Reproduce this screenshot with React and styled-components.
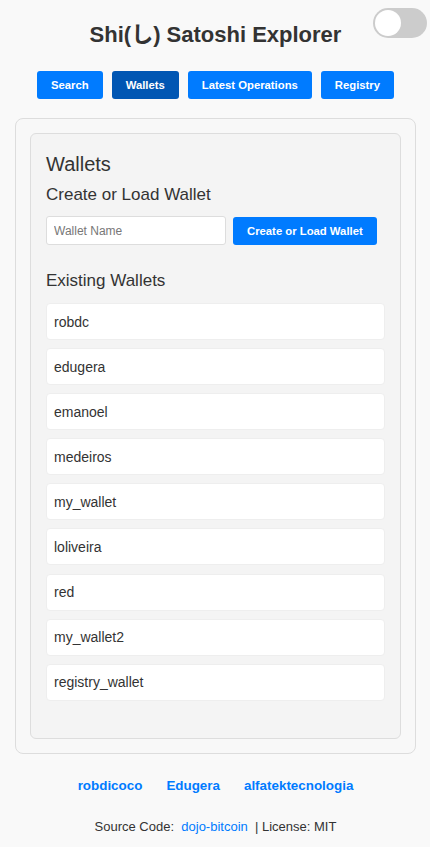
import React, { useState } from 'react';
import styled, { createGlobalStyle } from 'styled-components';

const GlobalStyle = createGlobalStyle`
  body {
    margin: 0;
    background-color: #f9f9f9;
    font-family: Arial, "Liberation Sans", "Noto Sans CJK JP", sans-serif;
    color: #333;
  }
`;

const Page = styled.div`
  position: relative;
  padding: 0 14px 14px 15px;
`;

// Toggle de tema, fica no canto
const Toggle = styled.button`
  position: absolute;
  top: 8px;
  right: 3px;
  width: 54px;
  height: 30px;
  border-radius: 15px;
  border: none;
  padding: 0;
  background-color: ${(p) => (p.on ? '#007bff' : '#ccc')};
  cursor: pointer;

  &::after {
    content: '';
    position: absolute;
    top: 2px;
    left: ${(p) => (p.on ? '26px' : '2px')};
    width: 26px;
    height: 26px;
    border-radius: 50%;
    background-color: #fff;
  }
`;

const Title = styled.h1`
  margin: 0;
  padding-top: 22px;
  font-size: 22px;
  font-weight: bold;
  text-align: center;
  color: #333;
  line-height: 26px;
`;

const Nav = styled.nav`
  display: flex;
  justify-content: center;
  gap: 9px;
  margin-top: 23px;
`;

const NavButton = styled.button`
  background-color: ${(p) => (p.active ? '#0056b3' : '#007bff')};
  color: #fff;
  border: none;
  border-radius: 3px;
  height: 28px;
  padding: 0 14px;
  font-family: inherit;
  font-size: 11.3px;
  font-weight: bold;
  cursor: pointer;
`;

const Container = styled.main`
  margin-top: 19px;
  border: 1px solid #ddd;
  border-radius: 8px;
  padding: 14px;
  background-color: #f8f8f8;
`;

const Card = styled.section`
  border: 1px solid #ddd;
  border-radius: 6px;
  background-color: #f4f4f4;
  padding: 18px 15px 37px;
`;

const Heading = styled.h2`
  margin: 0;
  font-size: 20px;
  font-weight: normal;
  line-height: 24px;
  color: #333;
`;

const SubHeading = styled.h3`
  margin: ${(p) => p.margin || '9px 0 0'};
  font-size: 17px;
  font-weight: normal;
  line-height: 20px;
  color: #333;
`;

const Row = styled.div`
  display: flex;
  align-items: center;
  gap: 7px;
  margin-top: 11px;
`;

const Input = styled.input`
  width: 180px;
  height: 29px;
  box-sizing: border-box;
  border: 1px solid #ddd;
  border-radius: 3px;
  padding: 0 7px;
  font-family: inherit;
  font-size: 12px;
  background: #fff;

  &::placeholder {
    color: #777;
  }
`;

const ActionButton = styled.button`
  background-color: #007bff;
  color: #fff;
  border: none;
  border-radius: 3px;
  height: 28px;
  padding: 0 14px;
  font-family: inherit;
  font-size: 11.3px;
  font-weight: bold;
  cursor: pointer;
`;

const List = styled.ul`
  list-style: none;
  margin: 12px 0 0;
  padding: 0;
  display: flex;
  flex-direction: column;
  gap: 8.1px;
`;

const Item = styled.li`
  background-color: #fff;
  border: 1px solid #eee;
  border-radius: 4px;
  height: 37px;
  box-sizing: border-box;
  display: flex;
  align-items: center;
  padding: 0 7px;
  font-size: 14px;
  color: #333;
  cursor: pointer;
`;

const Footer = styled.footer`
  text-align: center;
  margin-top: 24px;
`;

const Links = styled.div`
  display: flex;
  justify-content: center;
  gap: 24px;
`;

const FooterLink = styled.a`
  color: #007bff;
  font-weight: ${(p) => (p.bold ? 'bold' : 'normal')};
  font-size: ${(p) => (p.bold ? '13.4px' : '13px')};
  text-decoration: none;
`;

const Source = styled.p`
  margin: 26px 0 0;
  font-size: 13px;
  color: #333;
`;

const wallets = [
  'robdc',
  'edugera',
  'emanoel',
  'medeiros',
  'my_wallet',
  'loliveira',
  'red',
  'my_wallet2',
  'registry_wallet',
];

const App = () => {
  const [dark, setDark] = useState(false);
  const [name, setName] = useState('');

  return (
    <>
      <GlobalStyle />
      <Page>
        <Toggle on={dark ? 1 : 0} onClick={() => setDark(!dark)} aria-label="toggle theme" />
        <Title>Shi(し) Satoshi Explorer</Title>
        <Nav>
          <NavButton>Search</NavButton>
          <NavButton active>Wallets</NavButton>
          <NavButton>Latest Operations</NavButton>
          <NavButton>Registry</NavButton>
        </Nav>

        <Container>
          <Card>
            <Heading>Wallets</Heading>
            <SubHeading>Create or Load Wallet</SubHeading>
            <Row>
              <Input
                placeholder="Wallet Name"
                value={name}
                onChange={(e) => setName(e.target.value)}
              />
              <ActionButton>Create or Load Wallet</ActionButton>
            </Row>
            <SubHeading margin="26px 0 0">Existing Wallets</SubHeading>
            <List>
              {wallets.map((w) => (
                <Item key={w}>{w}</Item>
              ))}
            </List>
          </Card>
        </Container>

        <Footer>
          <Links>
            <FooterLink bold href="#">robdicoco</FooterLink>
            <FooterLink bold href="#">Edugera</FooterLink>
            <FooterLink bold href="#">alfatektecnologia</FooterLink>
          </Links>
          <Source>
            Source Code:&nbsp; <FooterLink href="#">dojo-bitcoin</FooterLink> &nbsp;| License: MIT
          </Source>
        </Footer>
      </Page>
    </>
  );
};

export default App;
